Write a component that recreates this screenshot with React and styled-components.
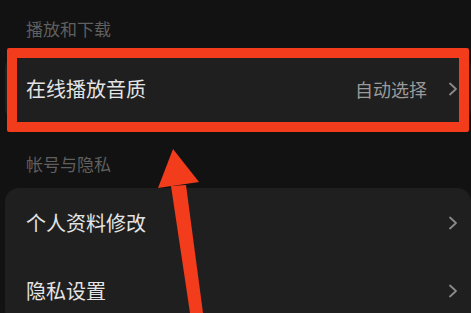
import React from "react"
import styled, { createGlobalStyle } from "styled-components"

const GlobalStyle = createGlobalStyle`
  html, body {
    margin: 0;
    padding: 0;
    background: #121212;
  }
  body {
    font-family: "Noto Sans CJK SC", "Noto Sans", sans-serif;
    -webkit-font-smoothing: antialiased;
  }
`

const Page = styled.div`
  position: relative;
  width: 471px;
  height: 313px;
  overflow: hidden;
  background: #121212;
  display: flex;
  flex-direction: column;
  & > * {
    flex-shrink: 0;
  }
`

const SectionTitle = styled.div`
  padding: ${(p) => p.$top}px 0 0 26px;
  height: ${(p) => p.$height}px;
  box-sizing: border-box;
  font-size: 17px;
  line-height: 17px;
  color: #5f5f5f;
`

const Card = styled.div`
  margin-left: 5px;
  background: #1f1f1f;
  border-radius: 14px;
  display: flex;
  flex-direction: column;
`

const Row = styled.div`
  height: ${(p) => p.$height || 67}px;
  display: flex;
  align-items: center;
  padding: 0 13px 0 21px;
`

const Label = styled.span`
  flex: 1;
  font-size: 20px;
  color: #e4e4e4;
`

const Value = styled.span`
  font-size: 18px;
  color: #9a9a9a;
  margin-right: 21px;
`

const Chevron = styled.svg`
  width: 10px;
  height: 14px;
  display: block;
`

const Highlight = styled.div`
  position: absolute;
  left: 7px;
  top: 48px;
  width: 462px;
  height: 84px;
  box-sizing: border-box;
  border: 10px solid #f23c1b;
  border-radius: 2px;
  pointer-events: none;
`

const ArrowLayer = styled.svg`
  position: absolute;
  left: 0;
  top: 0;
  pointer-events: none;
`

const Arrow = () => (
  <Chevron viewBox="0 0 10 14">
    <path d="M2 1.5 L8 7 L2 12.5" fill="none" stroke="#8a8a8a" strokeWidth="1.8" strokeLinecap="round" strokeLinejoin="round" />
  </Chevron>
)

export default function App() {
  return (
    <>
      <GlobalStyle />
      <Page>
        <SectionTitle $top={20} $height={55}>播放和下载</SectionTitle>
        <Card>
          <Row $height={67}>
            <Label>在线播放音质</Label>
            <Value>自动选择</Value>
            <Arrow />
          </Row>
        </Card>
        <SectionTitle $top={33} $height={66}>帐号与隐私</SectionTitle>
        <Card>
          <Row $height={69}>
            <Label>个人资料修改</Label>
            <Arrow />
          </Row>
          <Row $height={67}>
            <Label>隐私设置</Label>
            <Arrow />
          </Row>
        </Card>
        <Highlight />
        <ArrowLayer width="471" height="313" viewBox="0 0 471 313">
          <polygon points="173,149 158,188 199,182" fill="#f23c1b" />
          <polygon points="171,186 186,185 203,313 190,313" fill="#f23c1b" />
        </ArrowLayer>
      </Page>
    </>
  )
}
